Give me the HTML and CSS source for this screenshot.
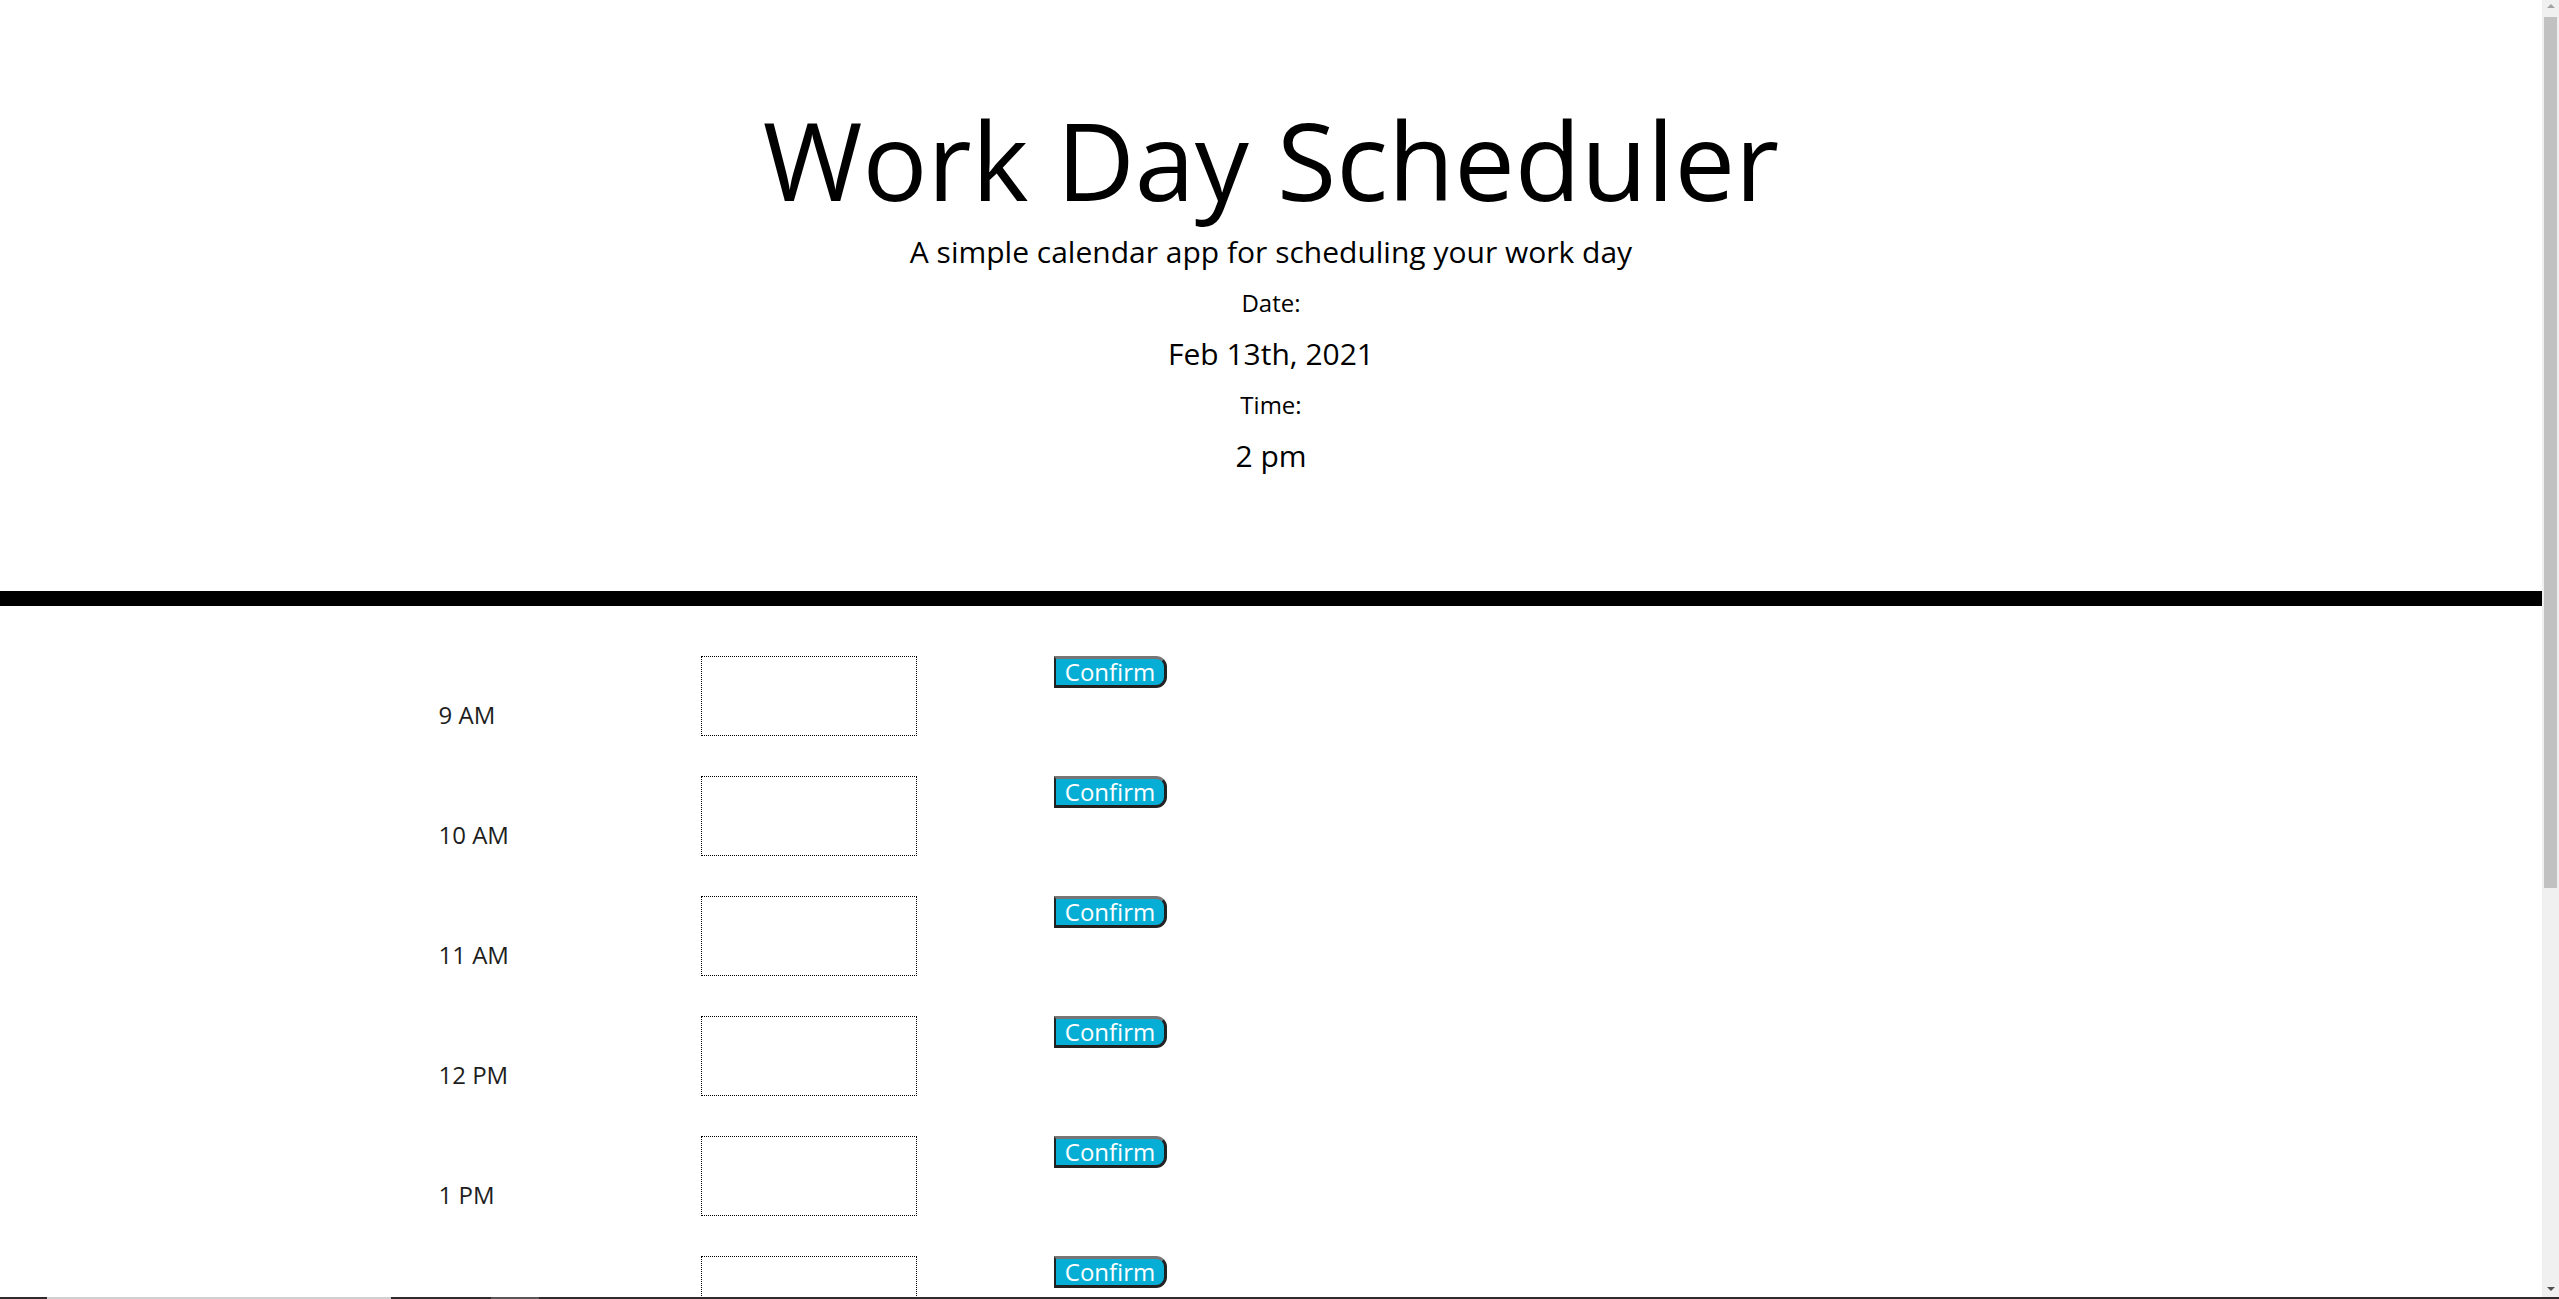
FILE: index.html
```html
<!DOCTYPE html>
<html lang="en">
<head>
<meta charset="utf-8">
<title>Work Day Scheduler</title>
<link rel="stylesheet" href="styles.css">
</head>
<body>
<div class="page">
  <header class="jumbotron">
    <h1 class="title">Work Day Scheduler</h1>
    <p class="lead">A simple calendar app for scheduling your work day</p>
    <p class="label">Date:</p>
    <p class="value">Feb 13th, 2021</p>
    <p class="label">Time:</p>
    <p class="value">2 pm</p>
  </header>
  <main class="container">
    <div class="row"><span class="hour">9 AM</span><textarea class="task"></textarea><button class="saveBtn">Confirm</button></div>
    <div class="row"><span class="hour">10 AM</span><textarea class="task"></textarea><button class="saveBtn">Confirm</button></div>
    <div class="row"><span class="hour">11 AM</span><textarea class="task"></textarea><button class="saveBtn">Confirm</button></div>
    <div class="row"><span class="hour">12 PM</span><textarea class="task"></textarea><button class="saveBtn">Confirm</button></div>
    <div class="row"><span class="hour">1 PM</span><textarea class="task"></textarea><button class="saveBtn">Confirm</button></div>
    <div class="row"><span class="hour">2 PM</span><textarea class="task"></textarea><button class="saveBtn">Confirm</button></div>
  </main>
</div>
<div class="scrollbar">
  <span class="arrow up"></span>
  <span class="thumb"></span>
  <span class="arrow down"></span>
</div>
<div class="taskbar">
  <span class="seg seg-a"></span>
  <span class="seg seg-b"></span>
</div>
</body>
</html>
```

FILE: styles.css
```css
html, body {
  margin: 0;
  padding: 0;
  height: 100%;
  overflow: hidden;
  background: #ffffff;
}

body {
  font-family: "Open Sans", "Liberation Sans", sans-serif;
  color: #212529;
}

.page {
  width: calc(100% - 17px);
}

.jumbotron {
  text-align: center;
  color: #000;
  padding: 95px 0 113px;
  border-bottom: 15px solid #000;
}

.title {
  margin: 0;
  font-size: 108px;
  line-height: 130px;
  font-weight: 400;
}

.lead {
  margin: 4px 0 0;
  font-size: 30px;
  line-height: 45px;
  font-weight: 400;
}

.label {
  margin: 11px 0 0;
  font-size: 24px;
  line-height: 36px;
}

.value {
  margin: 10px 0 0;
  font-size: 30px;
  line-height: 45px;
}

.container {
  width: 1710px;
  margin: 0 auto;
  padding: 50px 22.5px 40px;
  box-sizing: border-box;
}

.row {
  display: flex;
  align-items: flex-start;
  height: 120px;
}

.hour {
  width: 262.5px;
  flex: none;
  padding-top: 41px;
  font-size: 24px;
  line-height: 36px;
  color: #1e1e1e;
}

.task {
  flex: none;
  width: 216px;
  height: 80px;
  box-sizing: border-box;
  margin: 0;
  padding: 2px;
  border: 1px dotted #000;
  resize: none;
  font-family: inherit;
  font-size: 24px;
  background: #fff;
}

.saveBtn {
  flex: none;
  margin-left: 137px;
  width: 113px;
  height: 32px;
  box-sizing: border-box;
  padding: 0;
  font-family: "Open Sans", "Liberation Sans", sans-serif;
  font-size: 24px;
  line-height: 26px;
  color: #fff;
  background: #06aed5;
  border-style: solid;
  border-width: 3px 3px 3px 2px;
  border-color: #767676 #222 #222 #222;
  border-radius: 0 11px 11px 0;
  text-align: center;
}

.scrollbar {
  position: fixed;
  top: 0;
  right: 0;
  width: 17px;
  height: 100%;
  background: #f0f0f0;
}

.thumb {
  position: absolute;
  left: 2px;
  right: 2px;
  top: 17px;
  height: 871px;
  background: #c1c1c1;
}

.arrow {
  position: absolute;
  left: 5px;
  width: 0;
  height: 0;
  border-left: 4px solid transparent;
  border-right: 4px solid transparent;
}

.arrow.up {
  top: 4px;
  border-bottom: 4px solid #a3a3a3;
}

.arrow.down {
  bottom: 8px;
  border-top: 4px solid #505050;
}

.taskbar {
  position: fixed;
  left: 0;
  right: 0;
  bottom: 0;
  height: 2px;
  background: #2f2a2c;
}

.seg {
  position: absolute;
  top: 0;
  height: 2px;
}

.seg-a {
  left: 47px;
  width: 344px;
  background: #cfcfcf;
}

.seg-b {
  left: 491px;
  width: 48px;
  background: #5a5658;
}
```
